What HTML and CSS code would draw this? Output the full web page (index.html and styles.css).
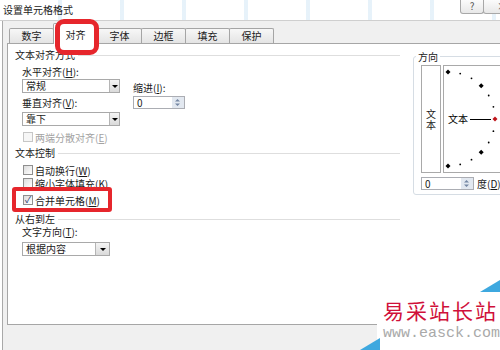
FILE: index.html
```html
<!DOCTYPE html>
<html lang="zh-CN">
  <head>
    <meta charset="UTF-8" />
    <meta name="viewport" content="width=device-width, initial-scale=1.0" />
    <title>设置单元格格式</title>
    <link rel="stylesheet" href="styles.css">
  </head>
  <body>
    <div class="dialog">
      <div class="titlebar">
        <span class="title">设置单元格格式</span>
        <div class="caption">
          <span class="cap-btn help">?</span>
          <span class="cap-btn close">×</span>
        </div>
      </div>

      <div class="main">
        <div class="tabs">
          <div class="tab">数字</div>
          <div class="tab active">对齐</div>
          <div class="tab">字体</div>
          <div class="tab">边框</div>
          <div class="tab">填充</div>
          <div class="tab">保护</div>
        </div>

        <div class="panel">
          <div class="left">
            <div class="section">文本对齐方式<span class="rule"></span></div>

            <div class="align-block">
              <div class="col-a">
                <div class="label">水平对齐(<u>H</u>):</div>
                <div class="select s1"><span>常规</span><span class="drop"></span></div>
                <div class="label l2">垂直对齐(<u>V</u>):</div>
                <div class="select s2"><span>靠下</span><span class="drop"></span></div>
              </div>
              <div class="col-b">
                <div class="label">缩进(<u>I</u>):</div>
                <div class="spin indent">
                  <span>0</span>
                  <span class="arrows">
                    <svg width="11" height="11" viewBox="0 0 11 11">
                      <path d="M3 4.5 L5.5 2 L8 4.5 Z M3 6.5 L5.5 9 L8 6.5 Z" fill="#7587a3" />
                    </svg>
                  </span>
                </div>
              </div>
            </div>

            <div class="check disabled c-justify"><span class="box"></span>两端分散对齐(<u>E</u>)</div>

            <div class="section sec-control">文本控制<span class="rule"></span></div>
            <div class="check c-wrap"><span class="box"></span>自动换行(<u>W</u>)</div>
            <div class="check c-shrink"><span class="box"></span>缩小字体填充(<u>K</u>)</div>
            <div class="check checked c-merge"><span class="box"></span>合并单元格(<u>M</u>)</div>

            <div class="section sec-rtl">从右到左<span class="rule"></span></div>
            <div class="label l-dir">文字方向(<u>T</u>):</div>
            <div class="select s3"><span>根据内容</span><span class="drop"></span></div>
          </div>

          <div class="right">
            <div class="group">
              <div class="legend">方向</div>
              <div class="orient">
                <div class="vtext"><span>文</span><span>本</span></div>
                <div class="dial">
                  <svg width="61" height="106" viewBox="0 0 61 106">
                    <g fill="#000">
                      <circle cx="16.2" cy="7.6" r="0.9" />
                      <circle cx="27.5" cy="12.3" r="0.9" />
                      <circle cx="44.7" cy="29.5" r="0.9" />
                      <circle cx="49.4" cy="40.8" r="0.9" />
                      <circle cx="49.4" cy="65.2" r="0.9" />
                      <circle cx="44.7" cy="76.5" r="0.9" />
                      <circle cx="27.5" cy="93.7" r="0.9" />
                      <circle cx="16.2" cy="98.4" r="0.9" />
                      <polygon points="4,3.5 6.5,6 4,8.5 1.5,6" />
                      <polygon points="37.2,17.3 39.7,19.8 37.2,22.3 34.7,19.8" />
                      <polygon points="37.2,83.7 39.7,86.2 37.2,88.7 34.7,86.2" />
                      <polygon points="4,97.5 6.5,100 4,102.5 1.5,100" />
                    </g>
                    <polygon points="51,50.5 53.5,53 51,55.5 48.5,53" fill="#c0161c" />
                    <line x1="26" y1="53.5" x2="47" y2="53.5" stroke="#000" stroke-width="1" />
                    <text class="dial-text" x="4" y="57">文本</text>
                  </svg>
                </div>
              </div>
              <div class="deg-row">
                <div class="spin deg">
                  <span>0</span>
                  <span class="arrows">
                    <svg width="11" height="11" viewBox="0 0 11 11">
                      <path d="M3 4.5 L5.5 2 L8 4.5 Z M3 6.5 L5.5 9 L8 6.5 Z" fill="#7587a3" />
                    </svg>
                  </span>
                </div>
                <span class="deg-label">度(<u>D</u>)</span>
              </div>
            </div>
          </div>
        </div>
      </div>
    </div>

    <!-- hand drawn red marks -->
    <div class="mark mark-tab"></div>
    <div class="mark mark-merge"></div>

    <div class="watermark">
      <svg class="wm-bg" width="145" height="74" viewBox="0 0 145 74">
        <rect x="22" y="16" width="123" height="58" fill="#fff" />
        <polygon points="125,16 145,4 145,16" fill="#3ea8df" />
        <polygon points="5,74 25,62 25,74" fill="#3ea8df" />
      </svg>
      <div class="wm-text">
        <div class="wm-name">易采站长站</div>
        <div class="wm-url">www.easck.com</div>
      </div>
    </div>
  </body>
</html>
```

FILE: styles.css
```css
* {
  padding: 0;
  margin: 0;
  box-sizing: border-box;
}

body {
  position: relative;
  width: 500px;
  height: 350px;
  overflow: hidden;
  background: #fff;
  color: #1a1a1a;
  font-family: "Noto Sans CJK SC", "Noto Sans", sans-serif;
  font-size: 10px;
  line-height: 12px;
}

u {
  text-decoration: underline;
}

.dialog {
  width: 520px;
}

/* title bar, spreadsheet grid faintly shows through */
.titlebar {
  display: flex;
  justify-content: space-between;
  align-items: flex-start;
  height: 21px;
  border-bottom: 1px solid #cfcfcf;
  background: #fff
    repeating-linear-gradient(90deg, transparent 0 58px, rgba(175, 212, 238, 0.3) 58px 62px);
}

.title {
  padding: 4px 0 0 3px;
  color: #222;
}

.caption {
  display: flex;
}

.cap-btn {
  height: 14px;
  border: 1px solid #a8a8a8;
  border-top: none;
  border-radius: 0 0 3px 3px;
  background: linear-gradient(#fbfbfb, #e8e8e8);
  color: #555;
  line-height: 12px;
  text-align: center;
}

.help {
  width: 24px;
  margin-right: -1px;
}

.close {
  width: 37px;
  padding-left: 13px;
  text-align: left;
}

.main {
  height: 329px;
  margin-left: 2px;
  padding-left: 4px;
  border-left: 1px solid #a9a9a9;
  background: #f0f0f0;
}

/* tabs */
.tabs {
  display: flex;
  align-items: flex-end;
  height: 22px;
  padding-left: 2px;
}

.tab {
  width: 45px;
  height: 15px;
  margin-right: -1px;
  border: 1px solid #a5a5a5;
  border-bottom: none;
  border-radius: 2px 2px 0 0;
  background: linear-gradient(#f7f7f7, #e4e4e4);
  line-height: 13px;
  text-align: center;
}

.tab.active {
  position: relative;
  height: 21px;
  margin-bottom: -1px;
  padding-top: 4px;
  background: #fff;
}

.panel {
  display: flex;
  height: 282px;
  border: 1px solid #a6a6a6;
  background: #fff;
}

/* left column */
.left {
  width: 392px;
  padding: 5px 0 0 7px;
}

.section {
  display: flex;
  align-items: center;
  height: 12px;
}

.rule {
  flex: 1;
  margin-left: 3px;
  border-top: 1px solid #dedede;
}

.sec-control {
  margin-top: 4px;
}

.sec-rtl {
  margin-top: 7px;
}

.label {
  height: 12px;
}

.align-block {
  display: flex;
  margin-top: 5px;
  padding-left: 7px;
}

.col-a {
  width: 98px;
}

.col-b {
  margin-left: 13px;
  padding-top: 16px;
}

.l2 {
  margin-top: 4px;
}

.select {
  display: flex;
  height: 14px;
  border: 1px solid #a9a9a9;
  background: #fff;
}

.select span:first-child {
  padding-left: 3px;
}

.drop {
  display: flex;
  align-items: center;
  justify-content: center;
  width: 10px;
  margin-left: auto;
  border-left: 1px solid #b5b5b5;
  background: linear-gradient(#f4f4f4, #dadada);
}

.drop::after {
  content: "";
  border-left: 3px solid transparent;
  border-right: 3px solid transparent;
  border-top: 3px solid #000;
}

.s1 {
  margin-top: 1px;
}

.s2 {
  margin-top: 3px;
}

.s3 {
  width: 88px;
  margin: 4px 0 0 7px;
}

.s3 .drop {
  width: 14px;
}

.spin {
  display: flex;
  height: 13px;
  width: 52px;
  border: 1px solid #abadb3;
  background: #fff;
  line-height: 11px;
}

.spin span:first-child {
  padding-left: 3px;
}

.arrows {
  display: flex;
  width: 12px;
  margin-left: auto;
  background: #e2e8f0;
}

.indent {
  margin-top: 2px;
}

/* checkboxes */
.check {
  display: flex;
  align-items: center;
  height: 12px;
  padding-left: 8px;
  line-height: 11px;
}

.box {
  display: flex;
  align-items: center;
  justify-content: center;
  width: 10px;
  height: 10px;
  margin-right: 2px;
  border: 1px solid #8f8f8f;
  background: linear-gradient(135deg, #dcdcdc, #fff);
}

.checked .box::after {
  content: "✓";
  color: #1f3a6e;
  font-size: 9px;
  line-height: 8px;
}

.disabled {
  color: #a3a3a3;
}

.disabled .box {
  border-color: #c6c6c6;
  background: #f6f6f6;
}

.c-justify {
  margin-top: 5px;
}

.c-wrap {
  margin-top: 5px;
}

.c-shrink {
  margin-top: 1px;
}

.c-merge {
  margin-top: 5px;
}

.l-dir {
  margin-top: 1px;
  padding-left: 7px;
}

/* orientation */
.right {
  width: 100px;
  margin-left: 13px;
  padding-top: 12px;
}

.group {
  padding: 0 0 4px 7px;
  border: 1px solid #d6dde4;
  border-radius: 3px;
}

.legend {
  width: fit-content;
  height: 12px;
  margin: -6px 0 0 -5px;
  padding: 0 2px;
  background: #fff;
}

.orient {
  display: flex;
  gap: 2px;
  height: 108px;
  margin-top: 2px;
}

.vtext {
  display: flex;
  flex-direction: column;
  align-items: center;
  justify-content: center;
  width: 20px;
  border: 1px solid #a9a9a9;
  line-height: 11px;
}

.dial {
  width: 62px;
  border: 1px solid #a9a9a9;
}

.dial svg {
  display: block;
}

.dial-text {
  font-family: "Noto Sans CJK SC", sans-serif;
  font-size: 10px;
}

.deg-row {
  display: flex;
  align-items: center;
  margin-top: 4px;
}

.deg {
  width: 53px;
}

.deg-label {
  margin-left: 3px;
}

/* red annotation marks */
.mark {
  position: absolute;
  border: 5px solid #e6262c;
  border-radius: 9px;
}

.mark-tab {
  left: 55px;
  top: 19px;
  width: 44px;
  height: 36px;
}

.mark-merge {
  left: 12px;
  top: 187px;
  width: 100px;
  height: 25px;
  border-width: 4px;
  border-radius: 3px;
}

/* site watermark */
.watermark {
  position: absolute;
  left: 355px;
  top: 276px;
  width: 145px;
  height: 74px;
}

.wm-bg {
  position: absolute;
  left: 0;
  top: 0;
}

.wm-text {
  position: relative;
  padding: 22px 0 0 28px;
  white-space: nowrap;
}

.wm-name {
  color: #d0103a;
  font-size: 21px;
  line-height: 24px;
  letter-spacing: 2px;
}

.wm-url {
  margin-top: 5px;
  color: #a9a9a9;
  font-family: "Liberation Mono", monospace;
  font-size: 15px;
  line-height: 14px;
}
```
